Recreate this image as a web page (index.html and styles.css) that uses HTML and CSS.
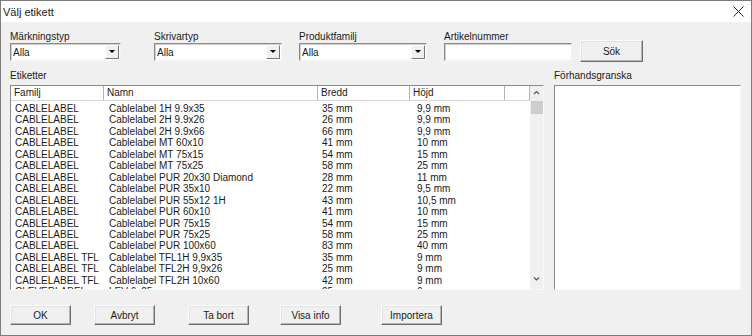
FILE: index.html
```html
<!DOCTYPE html>
<html lang="sv">
<head>
  <meta charset="UTF-8">
  <title>Välj etikett</title>
  <link rel="stylesheet" href="styles.css">
</head>
<body>
  <div class="fonster">
    <div class="titel">
      <span>Välj etikett</span>
      <svg class="stang" width="11" height="11" viewBox="0 0 11 11">
        <path d="M0.5 0.5 L10.5 10.5 M10.5 0.5 L0.5 10.5" stroke="#222" stroke-width="1" fill="none"/>
      </svg>
    </div>

    <div class="innehall">
      <div class="filter">
        <div class="falt">
          <label>Märkningstyp</label>
          <div class="combo"><span>Alla</span><span class="pil"></span></div>
        </div>
        <div class="falt">
          <label>Skrivartyp</label>
          <div class="combo"><span>Alla</span><span class="pil"></span></div>
        </div>
        <div class="falt">
          <label>Produktfamilj</label>
          <div class="combo"><span>Alla</span><span class="pil"></span></div>
        </div>
        <div class="falt">
          <label>Artikelnummer</label>
          <div class="text"></div>
        </div>
        <button class="knapp sok">Sök</button>
      </div>

      <div class="mitten">
        <div class="lista-kol">
          <label>Etiketter</label>
          <div class="lista">
            <div class="tabell">
              <div class="rubrik">
                <span>Familj</span><span>Namn</span><span>Bredd</span><span>Höjd</span><span></span>
              </div>
              <div class="rader" id="rader"></div>
            </div>
            <div class="rullist">
              <svg class="upp" width="13" height="14" viewBox="0 0 13 14"><path d="M4 8 L6.5 5.5 L9 8" stroke="#555" stroke-width="1.2" fill="none"/></svg>
              <div class="tumme"></div>
              <div class="spar"></div>
              <svg class="ner" width="13" height="14" viewBox="0 0 13 14"><path d="M4 5.5 L6.5 8 L9 5.5" stroke="#555" stroke-width="1.2" fill="none"/></svg>
            </div>
          </div>
        </div>
        <div class="forhand-kol">
          <label>Förhandsgranska</label>
          <div class="forhand"></div>
        </div>
      </div>

      <div class="knappar">
        <button class="knapp">OK</button>
        <button class="knapp">Avbryt</button>
        <button class="knapp">Ta bort</button>
        <button class="knapp">Visa info</button>
        <button class="knapp">Importera</button>
      </div>
    </div>
  </div>

  <script>
    const etiketter = [
      ["CABLELABEL", "Cablelabel 1H 9.9x35", "35 mm", "9,9 mm"],
      ["CABLELABEL", "Cablelabel 2H 9.9x26", "26 mm", "9,9 mm"],
      ["CABLELABEL", "Cablelabel 2H 9.9x66", "66 mm", "9,9 mm"],
      ["CABLELABEL", "Cablelabel MT 60x10", "41 mm", "10 mm"],
      ["CABLELABEL", "Cablelabel MT 75x15", "54 mm", "15 mm"],
      ["CABLELABEL", "Cablelabel MT 75x25", "58 mm", "25 mm"],
      ["CABLELABEL", "Cablelabel PUR 20x30 Diamond", "28 mm", "11 mm"],
      ["CABLELABEL", "Cablelabel PUR 35x10", "22 mm", "9,5 mm"],
      ["CABLELABEL", "Cablelabel PUR 55x12 1H", "43 mm", "10,5 mm"],
      ["CABLELABEL", "Cablelabel PUR 60x10", "41 mm", "10 mm"],
      ["CABLELABEL", "Cablelabel PUR 75x15", "54 mm", "15 mm"],
      ["CABLELABEL", "Cablelabel PUR 75x25", "58 mm", "25 mm"],
      ["CABLELABEL", "Cablelabel PUR 100x60", "83 mm", "40 mm"],
      ["CABLELABEL TFL", "Cablelabel TFL1H 9,9x35", "35 mm", "9 mm"],
      ["CABLELABEL TFL", "Cablelabel TFL2H 9,9x26", "25 mm", "9 mm"],
      ["CABLELABEL TFL", "Cablelabel TFL2H 10x60", "42 mm", "9 mm"],
      ["CLEVERLABEL", "LEV 6x25", "25 mm", "6 mm"]
    ];

    // en rad per etikett
    document.getElementById("rader").innerHTML = etiketter.map(r =>
      `<div class="rad">${r.map(c => `<span>${c}</span>`).join("")}</div>`
    ).join("");
  </script>
</body>
</html>
```

FILE: styles.css
```css
* {
  box-sizing: border-box;
}

body {
  margin: 0;
  background: #f0f0f0;
  font-family: "Liberation Sans Narrow", "Liberation Sans", sans-serif;
  font-size: 10px;
  color: #1a1a1a;
}

.fonster {
  width: 752px;
  height: 336px;
  border: 1px solid #7d7d7d;
  background: #f0f0f0;
  display: flex;
  flex-direction: column;
}

.titel {
  height: 21px;
  background: #fff;
  display: flex;
  align-items: center;
  justify-content: space-between;
  padding: 0 7px 0 2px;
  font-size: 11px;
}

.innehall {
  padding: 9px 9px 0 9px;
}

label {
  display: block;
  height: 12px;
  line-height: 12px;
}

.filter {
  display: grid;
  grid-template-columns: 144px 145px 145px 136px 63px;
  align-items: end;
}

.combo, .text {
  height: 18px;
  border: 1px solid;
  border-color: #8a8a8a #f4f4f4 #f4f4f4 #8a8a8a;
  box-shadow: inset 1px 1px 0 #d0d0d0;
  background: #fff;
  display: flex;
  align-items: center;
  justify-content: space-between;
  padding: 0 1px 0 2px;
}

.falt:nth-child(1) .combo { width: 111px; }
.falt:nth-child(2) .combo,
.falt:nth-child(3) .combo,
.falt:nth-child(4) .text { width: 128px; }

.pil {
  width: 14px;
  height: 14px;
  background: #f0f0f0;
  border: 1px solid;
  border-color: #fff #777 #777 #fff;
  position: relative;
}

.pil::after {
  content: "";
  position: absolute;
  left: 3px;
  top: 4px;
  border-left: 3px solid transparent;
  border-right: 3px solid transparent;
  border-top: 3px solid #000;
}

.knapp {
  font-family: inherit;
  font-size: 10px;
  color: #1a1a1a;
  height: 20px;
  padding: 0;
  background: #f0f0f0;
  border: 1px solid;
  border-color: #fcfcfc #6e6e6e #6e6e6e #fcfcfc;
  box-shadow: inset -1px -1px 0 #b4b4b4, inset 1px 1px 0 #e3e3e3;
}

.sok {
  height: 22px;
  width: 63px;
  margin-bottom: -1px;
}

.mitten {
  display: flex;
  margin-top: 9px;
}

.mitten label {
  margin-bottom: 3px;
}

.lista {
  width: 534px;
  height: 205px;
  border: 1px solid;
  border-color: #8a8a8a #f8f8f8 #f8f8f8 #8a8a8a;
  background: #fff;
  display: flex;
  overflow: hidden;
}

.tabell {
  flex: 1;
  overflow: hidden;
}

.rubrik, .rad {
  display: grid;
  grid-template-columns: 93px 214px 92px 95px 25px;
}

.rubrik span {
  height: 15px;
  line-height: 14px;
  padding-left: 3px;
  border-right: 1px solid #b5b5b5;
  border-bottom: 1px solid #d8d8d8;
}

.rader {
  padding-top: 2px;
}

.rad span {
  line-height: 11.45px;
  padding-left: 4px;
  white-space: nowrap;
}

.rad span:nth-child(2) { padding-left: 5px; }
.rad span:nth-child(4) { padding-left: 7px; }

.rullist {
  width: 13px;
  background: #f0f0f0;
  display: flex;
  flex-direction: column;
}

.tumme {
  height: 13px;
  margin: 1px 0 0 1px;
  width: 12px;
  background: #cdcdcd;
}

.spar {
  flex: 1;
}

.ner {
  margin-bottom: 3px;
}

.forhand-kol {
  margin-left: 10px;
}

.forhand {
  width: 187px;
  height: 205px;
  border: 1px solid;
  border-color: #8a8a8a #f8f8f8 #f8f8f8 #8a8a8a;
  background: #fff;
}

.knappar {
  display: grid;
  grid-template-columns: 84px 94px 92px 101px 61px;
  margin-top: 15px;
}

.knappar .knapp {
  width: 61px;
}
```
